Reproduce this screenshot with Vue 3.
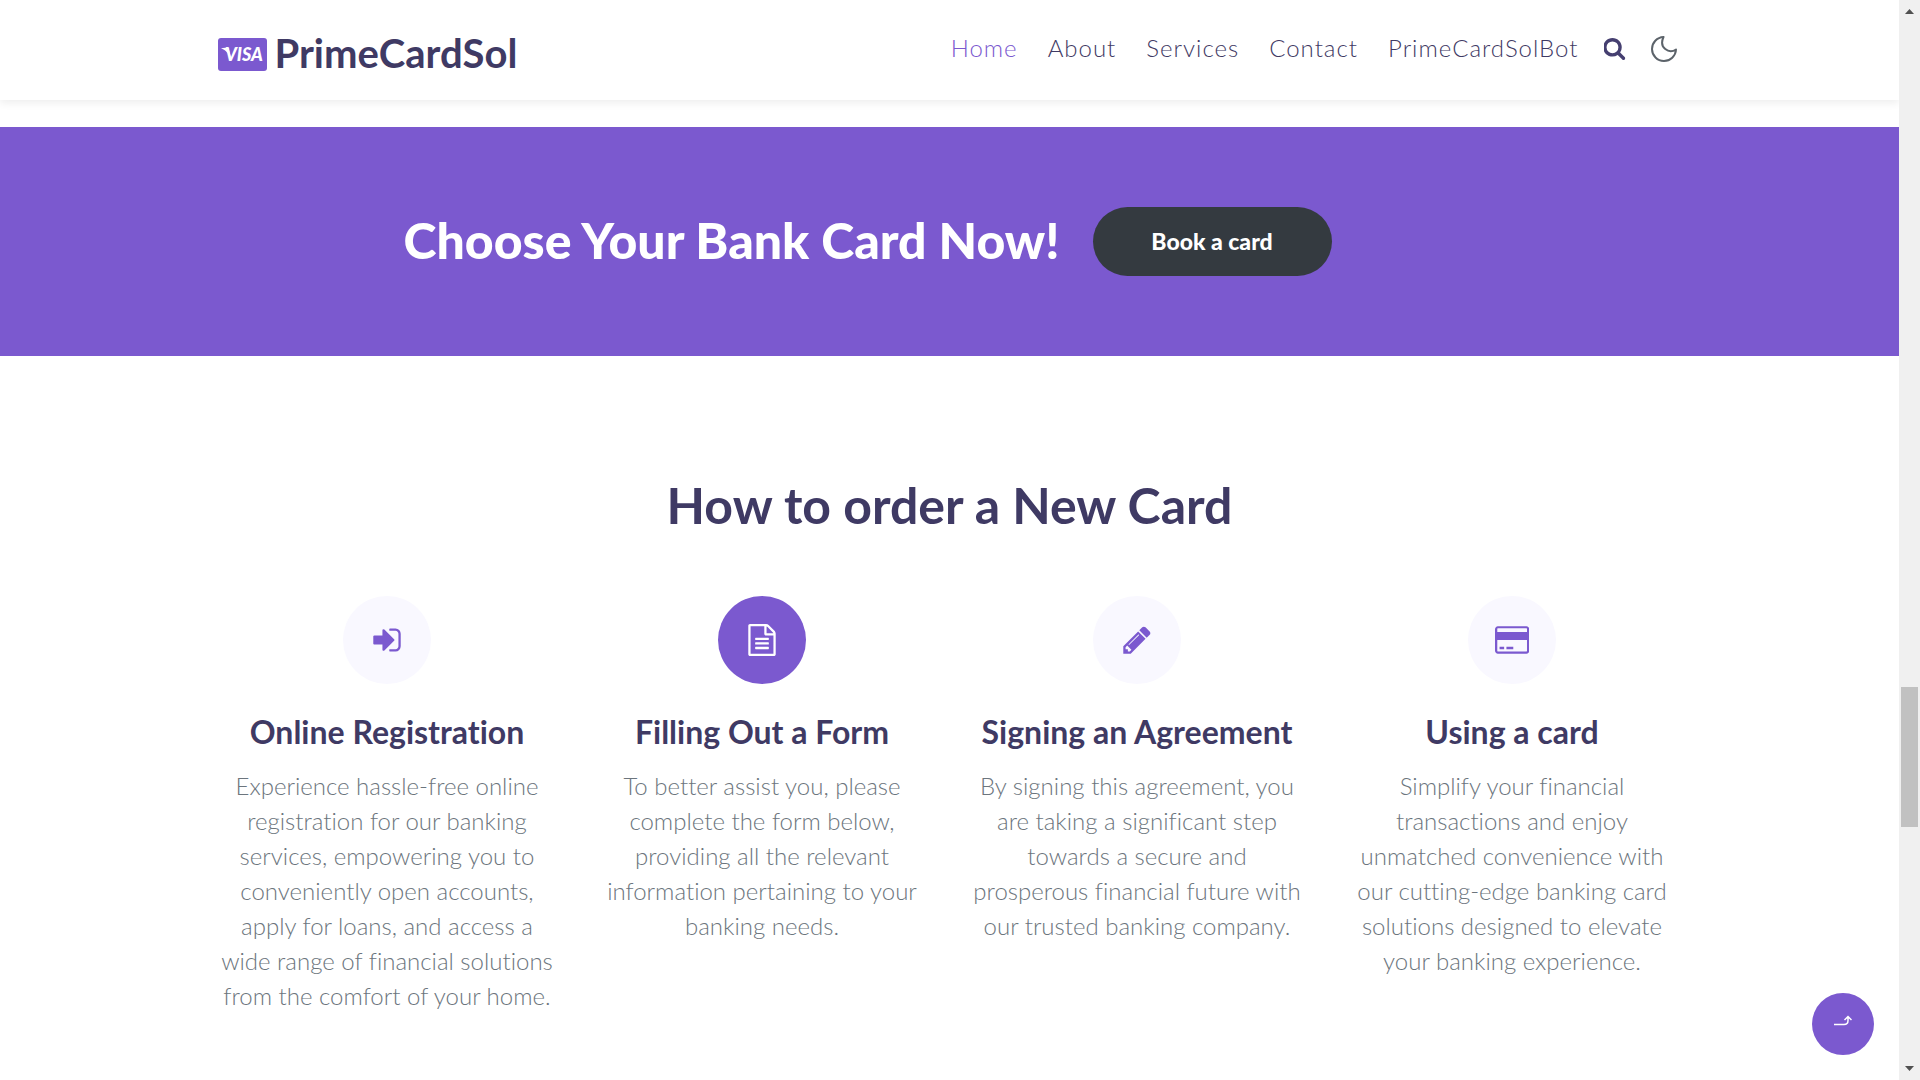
<script setup>
const links = ['Home', 'About', 'Services', 'Contact', 'PrimeCardSolBot']

const steps = [
  {
    icon: 'enter',
    title: 'Online Registration',
    text: 'Experience hassle-free online\nregistration for our banking\nservices, empowering you to\nconveniently open accounts,\napply for loans, and access a\nwide range of financial solutions\nfrom the comfort of your home.'
  },
  {
    icon: 'form',
    active: true,
    title: 'Filling Out a Form',
    text: 'To better assist you, please\ncomplete the form below,\nproviding all the relevant\ninformation pertaining to your\nbanking needs.'
  },
  {
    icon: 'pencil',
    title: 'Signing an Agreement',
    text: 'By signing this agreement, you\nare taking a significant step\ntowards a secure and\nprosperous financial future with\nour trusted banking company.'
  },
  {
    icon: 'card',
    title: 'Using a card',
    text: 'Simplify your financial\ntransactions and enjoy\nunmatched convenience with\nour cutting-edge banking card\nsolutions designed to elevate\nyour banking experience.'
  }
]

const icons = {
  enter: {
    box: '0 0 1792 1792',
    d: 'M1312 896q0 26-19 45l-544 544q-19 19-45 19t-45-19-19-45v-288h-448q-26 0-45-19t-19-45v-384q0-26 19-45t45-19h448v-288q0-26 19-45t45-19 45 19l544 544q19 19 19 45zm352-352v704q0 119-84.5 203.5t-203.5 84.5h-320q-13 0-22.5-9.5t-9.5-22.5q0-4-1-20t-.5-26.5 3-23.5 10-19.5 20.5-6.5h320q66 0 113-47t47-113v-704q0-66-47-113t-113-47h-312l-11.5-1-11.5-3-8-5.5-7-9-2-13.5q0-4-1-20t-.5-26.5 3-23.5 10-19.5 20.5-6.5h320q119 0 203.5 84.5t84.5 203.5z'
  },
  form: {
    box: '0 0 1792 1792',
    d: 'M1596 380q28 28 48 76t20 88v1152q0 40-28 68t-68 28h-1344q-40 0-68-28t-28-68v-1600q0-40 28-68t68-28h896q40 0 88 20t76 48zm-444-244v376h376q-10-29-22-41l-313-313q-12-12-41-22zm384 1528v-1024h-416q-40 0-68-28t-28-68v-416h-768v1536h1280zm-1024-864q0-14 9-23t23-9h704q14 0 23 9t9 23v64q0 14-9 23t-23 9h-704q-14 0-23-9t-9-23v-64zm736 224q14 0 23 9t9 23v64q0 14-9 23t-23 9h-704q-14 0-23-9t-9-23v-64q0-14 9-23t23-9h704zm0 256q14 0 23 9t9 23v64q0 14-9 23t-23 9h-704q-14 0-23-9t-9-23v-64q0-14 9-23t23-9h704z'
  },
  pencil: {
    box: '0 0 1792 1792',
    d: 'M491 1536l91-91-235-235-91 91v107h128v128h107zm523-928q0-22-22-22-10 0-17 7l-542 542q-7 7-7 17 0 22 22 22 10 0 17-7l542-542q7-7 7-17zm-54-192l416 416-832 832h-416v-416zm683 96q0 53-37 90l-166 166-416-416 166-165q36-38 90-38 53 0 91 38l235 234q37 39 37 91z'
  },
  card: {
    box: '-64 0 1920 1792',
    d: 'M1696 128q66 0 113 47t47 113v1216q0 66-47 113t-113 47H96q-66 0-113-47t-47-113V288q0-66 47-113t113-47zM96 240q-13 0-22.5 9.500t-9.500 22.500v176h1664V272q0-13-9.500-22.500t-22.500-9.500zM1696 1536q13 0 22.500-9.500t9.500-22.500V896H64v608q0 13 9.500 22.500t22.500 9.500zM192 1408v-128h256v128zm384 0v-128h384v128z'
  }
}
</script>

<template>
  <div class="window">
    <div class="page">
      <header class="header">
        <div class="container header-row">
          <a class="brand" href="#">
            <svg class="visa" viewBox="0 0 49 33" aria-hidden="true">
              <rect width="49" height="33" rx="3" />
              <path d="M3 10.500c2-1 5-1 7.500-.5l2.500 9-1 2c-1-5-3-8.500-9-10.500z" />
              <text x="7" y="23">VISA</text>
            </svg>
            <span>PrimeCardSol</span>
          </a>
          <nav class="nav">
            <a v-for="(link, i) in links" :key="link" href="#" :class="{ current: i === 0 }">{{ link }}</a>
            <button class="icon-button" type="button" aria-label="Search">
              <svg class="search" viewBox="128 128 1664 1664" aria-hidden="true">
                <path d="M1216 832q0-185-131.500-316.500t-316.500-131.500-316.500 131.500-131.500 316.500 131.500 316.500 316.500 131.500 316.500-131.500 131.500-316.500zm512 832q0 52-38 90t-90 38q-54 0-90-38l-343-342q-179 124-399 124-143 0-273.500-55.500t-225-150-150-225-55.500-273.500 55.500-273.500 150-225 225-150 273.500-55.500 273.500 55.500 225 150 150 225 55.500 273.500q0 220-124 399l343 343q37 37 37 90z" />
              </svg>
            </button>
            <button class="icon-button" type="button" aria-label="Dark mode">
              <svg class="moon" viewBox="0 0 26 26" aria-hidden="true">
                <path d="M12.500 1A12 12 0 1 0 25 13.500C18 18 7.500 12 12.500 1z" />
              </svg>
            </button>
          </nav>
        </div>
      </header>

      <main>
        <section class="banner">
          <div class="container banner-row">
            <h2>Choose Your Bank Card Now!</h2>
            <button class="book" type="button">Book a card</button>
          </div>
        </section>

        <section class="order">
          <div class="container">
            <h2>How to order a New Card</h2>
            <div class="steps">
              <article v-for="step in steps" :key="step.title" class="step">
                <span class="badge" :class="{ active: step.active }">
                  <svg :viewBox="icons[step.icon].box" aria-hidden="true">
                    <path :d="icons[step.icon].d" fill-rule="evenodd" />
                  </svg>
                </span>
                <h3>{{ step.title }}</h3>
                <p>{{ step.text }}</p>
              </article>
            </div>
          </div>
        </section>
      </main>

      <button class="to-top" type="button" aria-label="Back to top">
        <svg viewBox="0 0 18 11" aria-hidden="true">
          <path d="M0 9.500h10q4 0 4-4V1.500M10.500 5L14 1.500 17.500 5" />
        </svg>
      </button>
    </div>

    <div class="scrollbar" aria-hidden="true">
      <svg viewBox="0 0 9 5"><path d="M0 5L4.500 0 9 5z" /></svg>
      <div class="track">
        <div class="thumb"></div>
      </div>
      <svg viewBox="0 0 9 5"><path d="M0 0L4.500 5 9 0z" /></svg>
    </div>
  </div>
</template>

<style>
body {
  margin: 0;
  background: #fff;
}
</style>

<style scoped>
.window {
  display: flex;
  min-height: 100vh;
  font-family: Lato, "Open Sans", sans-serif;
  font-variant-ligatures: none;
  color: #3f3a64;
}

.page {
  position: relative;
  flex: 1;
  min-width: 0;
}

.container {
  box-sizing: border-box;
  max-width: 1500px;
  margin: 0 auto;
}

h2,
h3,
p {
  margin: 0;
}

button {
  font-family: inherit;
  border: 0;
  cursor: pointer;
}

a {
  color: inherit;
  text-decoration: none;
}

.header {
  background: #fff;
  box-shadow: 0 3px 8px rgba(0, 0, 0, 0.07);
}

.header-row {
  display: flex;
  justify-content: space-between;
  height: 100px;
  padding: 0 23px 0 18px;
}

.brand {
  display: flex;
  align-items: center;
  gap: 8px;
  height: 108px;
  font-size: 40px;
  line-height: 46px;
  font-weight: 700;
}

.brand span {
  padding-bottom: 2px;
}

.visa {
  width: 49px;
  height: 33px;
}

.visa rect {
  fill: #7b59cf;
}

.visa path,
.visa text {
  fill: #fff;
}

.visa text {
  font-size: 18px;
  font-weight: 900;
  font-style: italic;
}

.nav {
  display: flex;
  align-items: center;
  gap: 30px;
  height: 98px;
  font-size: 24px;
  line-height: 28px;
  font-weight: 300;
}

.nav a {
  padding-bottom: 2px;
  letter-spacing: 1px;
}

.nav .current {
  color: #7b59cf;
}

.icon-button {
  display: flex;
  padding: 0;
  background: none;
  margin-left: -5px;
}

.search {
  width: 22px;
  height: 22px;
  fill: #453f70;
}

.moon {
  width: 26px;
  height: 26px;
  fill: none;
  stroke: #5c636a;
  stroke-width: 2;
  stroke-linejoin: round;
}

.banner {
  margin-top: 27px;
  padding: 80px 0;
  background: #7b59cf;
}

.banner-row {
  display: flex;
  align-items: center;
  padding-left: 204px;
}

.banner h2 {
  flex: 0 0 689px;
  padding-bottom: 4px;
  font-size: 50px;
  line-height: 60px;
  font-weight: 900;
  color: #fff;
}

.book {
  width: 239px;
  height: 69px;
  padding: 0 0 2px;
  border-radius: 35px;
  background: #343a40;
  color: #fff;
  font-size: 23px;
  font-weight: 900;
}

.order {
  padding: 119px 0 46px;
}

.order h2 {
  font-size: 50px;
  line-height: 60px;
  font-weight: 700;
  text-align: center;
}

.steps {
  display: grid;
  grid-template-columns: repeat(4, 1fr);
  margin-top: 61px;
}

.step {
  display: flex;
  flex-direction: column;
  align-items: center;
  text-align: center;
}

.badge {
  display: flex;
  align-items: center;
  justify-content: center;
  width: 88px;
  height: 88px;
  border-radius: 50%;
  background: #f9f8ff;
}

.badge svg {
  height: 32px;
  fill: #7b59cf;
}

.badge.active {
  background: #7b59cf;
}

.badge.active svg {
  fill: #fff;
}

.step h3 {
  margin-top: 29px;
  font-size: 32px;
  line-height: 38px;
  font-weight: 700;
}

.step p {
  margin-top: 17px;
  font-size: 24px;
  line-height: 35px;
  font-weight: 300;
  color: #6c757d;
  white-space: pre-line;
}

.to-top {
  position: fixed;
  right: 46px;
  bottom: 25px;
  display: flex;
  align-items: center;
  justify-content: center;
  width: 62px;
  height: 62px;
  padding: 0 0 8px;
  border-radius: 50%;
  background: #7b59cf;
}

.to-top svg {
  width: 18px;
  height: 11px;
  fill: none;
  stroke: #fff;
  stroke-width: 1.5;
}

.scrollbar {
  box-sizing: border-box;
  position: sticky;
  top: 0;
  display: flex;
  flex-direction: column;
  align-items: center;
  justify-content: space-between;
  width: 21px;
  height: 100vh;
  padding: 9px 0;
  background: #f0f0f0;
}

.scrollbar svg {
  width: 9px;
  height: 5px;
  fill: #505050;
}

.track {
  flex: 1;
  display: flex;
  flex-direction: column;
}

.track::before {
  content: "";
  flex: 673;
}

.thumb {
  flex: 140;
  width: 17px;
  background: #c1c1c1;
}

.track::after {
  content: "";
  flex: 239;
}
</style>
